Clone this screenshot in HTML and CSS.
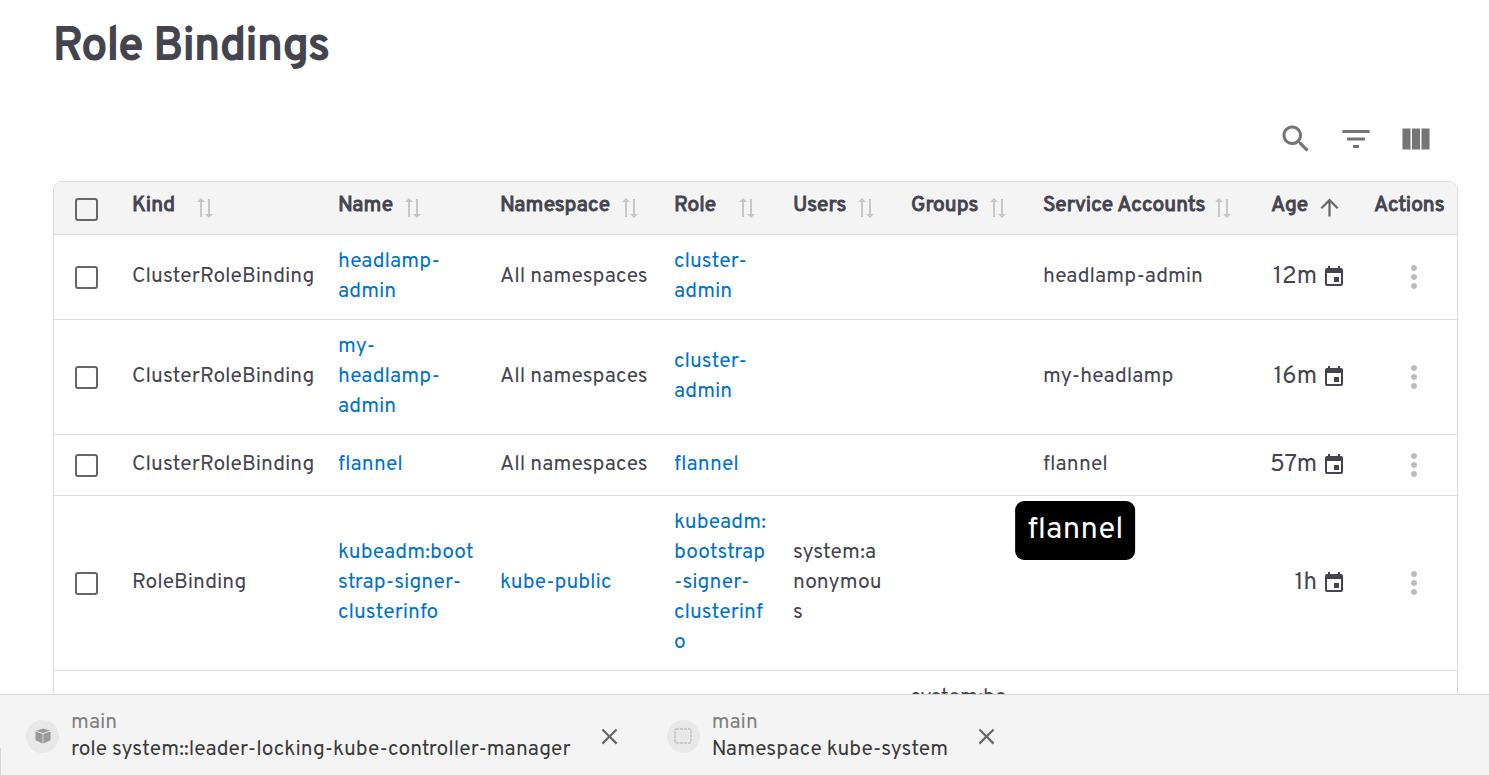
FILE: index.html
```html
<!DOCTYPE html>
<html lang="en">
<head>
<meta charset="utf-8">
<meta name="viewport" content="width=device-width, initial-scale=1">
<title>Role Bindings</title>
<link rel="stylesheet" href="styles.css">
</head>
<body>
<svg class="sprite" aria-hidden="true">
  <symbol id="i-search" viewBox="0 0 24 24"><path d="M15.5 14h-.79l-.28-.27C15.41 12.59 16 11.11 16 9.5 16 5.91 13.09 3 9.5 3S3 5.91 3 9.5 5.91 16 9.5 16c1.61 0 3.09-.59 4.23-1.57l.27.28v.79l5 4.99L20.49 19l-4.99-5zm-6 0C7.01 14 5 11.99 5 9.5S7.01 5 9.5 5 14 7.01 14 9.5 11.99 14 9.5 14z"/></symbol>
  <symbol id="i-filter" viewBox="0 0 24 24"><path d="M10 18h4v-2h-4v2zM3 6v2h18V6H3zm3 7h12v-2H6v2z"/></symbol>
  <symbol id="i-columns" viewBox="0 0 24 24"><path d="M14.67 5v14H9.33V5h5.34zm1 14H21V5h-5.33v14zm-7.34 0V5H3v14h5.33z"/></symbol>
  <symbol id="i-sort" viewBox="0 0 24 24"><path transform="rotate(-90 12 12)" d="m18 12 4-4-4-4v3H3v2h15zM6 12l-4 4 4 4v-3h15v-2H6z"/></symbol>
  <symbol id="i-up" viewBox="0 0 24 24"><path d="m4 12 1.41 1.41L11 7.83V20h2V7.83l5.58 5.59L20 12l-8-8-8 8z"/></symbol>
  <symbol id="i-calendar" viewBox="0 0 24 24"><path d="M19 19H5V8h14m-3-7v2H8V1H6v2H5c-1.11 0-2 .89-2 2v14a2 2 0 0 0 2 2h14a2 2 0 0 0 2-2V5a2 2 0 0 0-2-2h-1V1m-1 11h-5v5h5v-5Z"/></symbol>
  <symbol id="i-more" viewBox="0 0 24 24"><path d="M12 8c1.1 0 2-.9 2-2s-.9-2-2-2-2 .9-2 2 .9 2 2 2zm0 2c-1.1 0-2 .9-2 2s.9 2 2 2 2-.9 2-2-.9-2-2-2zm0 6c-1.1 0-2 .9-2 2s.9 2 2 2 2-.9 2-2-.9-2-2-2z"/></symbol>
  <symbol id="i-close" viewBox="0 0 24 24"><path d="M19 6.41 17.59 5 12 10.59 6.41 5 5 6.41 10.59 12 5 17.59 6.41 19 12 13.41 17.59 19 19 17.59 13.41 12z"/></symbol>
</svg>

<main class="page">
  <h1 class="title">Role Bindings</h1>
  <div class="toolbar">
    <button class="icon-btn" type="button" aria-label="Search"><svg><use href="#i-search"/></svg></button>
    <button class="icon-btn" type="button" aria-label="Filters"><svg><use href="#i-filter"/></svg></button>
    <button class="icon-btn" type="button" aria-label="Columns"><svg><use href="#i-columns"/></svg></button>
  </div>
  <div class="table-frame">
    <table class="table">
      <colgroup>
        <col class="c-check"><col class="c-kind"><col class="c-name"><col class="c-ns"><col class="c-role"><col class="c-users"><col class="c-groups"><col class="c-sa"><col class="c-age"><col class="c-actions">
      </colgroup>
      <thead>
        <tr>
          <th class="check check-all"><input class="box" type="checkbox" aria-label="Select all"></th>
          <th><span class="head"><span class="label">Kind</span><svg class="sort"><use href="#i-sort"/></svg></span></th>
          <th><span class="head"><span class="label">Name</span><svg class="sort"><use href="#i-sort"/></svg></span></th>
          <th><span class="head"><span class="label">Namespace</span><svg class="sort"><use href="#i-sort"/></svg></span></th>
          <th><span class="head"><span class="label">Role</span><svg class="sort"><use href="#i-sort"/></svg></span></th>
          <th><span class="head"><span class="label">Users</span><svg class="sort"><use href="#i-sort"/></svg></span></th>
          <th><span class="head"><span class="label">Groups</span><svg class="sort"><use href="#i-sort"/></svg></span></th>
          <th><span class="head"><span class="label">Service Accounts</span><svg class="sort"><use href="#i-sort"/></svg></span></th>
          <th><span class="head head-end">Age<svg class="sorted"><use href="#i-up"/></svg></span></th>
          <th><span class="head">Actions</span></th>
        </tr>
      </thead>
      <tbody>
        <tr>
          <td class="check"><input class="box" type="checkbox" aria-label="Select headlamp-admin"></td>
          <td>ClusterRoleBinding</td>
          <td><a href="#">headlamp-<br>admin</a></td>
          <td>All namespaces</td>
          <td><a href="#">cluster-<br>admin</a></td>
          <td></td><td></td>
          <td>headlamp-admin</td>
          <td><span class="age">12m<svg><use href="#i-calendar"/></svg></span></td>
          <td class="actions"><button class="more" type="button" aria-label="Actions"><svg><use href="#i-more"/></svg></button></td>
        </tr>
        <tr>
          <td class="check"><input class="box" type="checkbox" aria-label="Select my-headlamp-admin"></td>
          <td>ClusterRoleBinding</td>
          <td><a href="#">my-<br>headlamp-<br>admin</a></td>
          <td>All namespaces</td>
          <td><a href="#">cluster-<br>admin</a></td>
          <td></td><td></td>
          <td>my-headlamp</td>
          <td><span class="age">16m<svg><use href="#i-calendar"/></svg></span></td>
          <td class="actions"><button class="more" type="button" aria-label="Actions"><svg><use href="#i-more"/></svg></button></td>
        </tr>
        <tr>
          <td class="check"><input class="box" type="checkbox" aria-label="Select flannel"></td>
          <td>ClusterRoleBinding</td>
          <td><a href="#">flannel</a></td>
          <td>All namespaces</td>
          <td><a href="#">flannel</a></td>
          <td></td><td></td>
          <td><span class="tip-anchor">flannel<span class="tip" role="tooltip">flannel</span></span></td>
          <td><span class="age">57m<svg><use href="#i-calendar"/></svg></span></td>
          <td class="actions"><button class="more" type="button" aria-label="Actions"><svg><use href="#i-more"/></svg></button></td>
        </tr>
        <tr>
          <td class="check"><input class="box" type="checkbox" aria-label="Select kubeadm:bootstrap-signer-clusterinfo"></td>
          <td>RoleBinding</td>
          <td><a href="#">kubeadm:boot<br>strap-signer-<br>clusterinfo</a></td>
          <td><a href="#">kube-public</a></td>
          <td><a href="#">kubeadm:<br>bootstrap<br>-signer-<br>clusterinf<br>o</a></td>
          <td>system:a<br>nonymou<br>s</td><td></td>
          <td></td>
          <td><span class="age">1h<svg><use href="#i-calendar"/></svg></span></td>
          <td class="actions"><button class="more" type="button" aria-label="Actions"><svg><use href="#i-more"/></svg></button></td>
        </tr>
        <tr>
          <td></td><td></td><td></td><td></td><td></td><td></td>
          <td>system:bo</td>
          <td></td><td></td><td></td>
        </tr>
      </tbody>
    </table>
  </div>
</main>

<footer class="dock">
  <div class="task">
    <span class="badge">
      <svg viewBox="0 0 16 16"><path fill="#999" d="M8 .5 15 2.7 8 5 1 2.7zM.5 3.6 7.6 6v9.4L.5 12.2zM15.5 3.6 8.4 6v9.4l7.1-3.2z"/></svg>
    </span>
    <span class="task-text"><span class="cluster">main</span><span>role system::leader-locking-kube-controller-manager</span></span>
    <button class="close" type="button" aria-label="Close"><svg><use href="#i-close"/></svg></button>
  </div>
  <div class="task">
    <span class="badge">
      <svg class="wide" viewBox="0 0 18 16"><rect x="1" y="1" width="16" height="14" rx="1" fill="none" stroke="#a8a8a8" stroke-dasharray="3 1"/></svg>
    </span>
    <span class="task-text"><span class="cluster">main</span><span>Namespace kube-system</span></span>
    <button class="close" type="button" aria-label="Close"><svg><use href="#i-close"/></svg></button>
  </div>
</footer>
</body>
</html>
```
FILE: styles.css
```css
* { box-sizing: border-box; }

body {
  margin: 0;
  height: 100vh;
  display: flex;
  flex-direction: column;
  overflow: hidden;
  background: #fff;
  color: #44444f;
  font-family: Overpass, Roboto, "Liberation Sans", sans-serif;
  font-size: 21px;
  line-height: 30px;
}

.sprite { position: absolute; width: 0; height: 0; }

svg { display: block; fill: currentColor; flex: none; }

button {
  margin: 0;
  padding: 0;
  border: 0;
  background: none;
  color: inherit;
  font: inherit;
  cursor: pointer;
}

a { color: #0072c9; text-decoration: none; }

.page {
  flex: 1;
  min-height: 0;
  overflow: hidden;
  padding: 20px 31px 0 53px;
}

.title {
  margin: 0;
  font-size: 45px;
  font-weight: 400;
  line-height: 56px;
  -webkit-text-stroke: 2px currentColor;
}

.toolbar {
  display: flex;
  justify-content: flex-end;
  gap: 24px;
  padding: 45px 24px 24px;
  color: #757575;
}

.icon-btn svg, .more svg { width: 36px; height: 36px; }

.table-frame {
  border: 1px solid #dcdcde;
  border-radius: 9px;
  overflow: hidden;
}

.table {
  width: 100%;
  table-layout: fixed;
  border-collapse: separate;
  border-spacing: 0;
}

.c-check { width: 66px; }
.c-kind { width: 206px; }
.c-name { width: 162px; }
.c-ns { width: 174px; }
.c-role { width: 119px; }
.c-users { width: 118px; }
.c-groups { width: 132px; }
.c-sa { width: 216px; }
.c-age { width: 115px; }
.c-actions { width: 95px; }

th, td {
  padding: 12px;
  border-bottom: 1px solid #dcdcde;
  text-align: left;
  vertical-align: middle;
  white-space: nowrap;
}

th {
  padding: 9px 12px 13px;
  background: #f4f4f4;
  font-weight: 400;
  -webkit-text-stroke: 1px currentColor;
}

.head { display: flex; align-items: center; gap: 8px; }
.head-end { justify-content: flex-end; padding-right: 7px; }
.label { min-width: 53px; }

.sort { width: 24px; height: 24px; margin-top: 4px; color: #c8c8c8; }
.sorted { width: 27px; height: 27px; margin-top: 2px; color: #666; }

.check { padding: 0 0 0 21px; }
.check-all { padding-top: 2px; }

.box {
  appearance: none;
  display: block;
  width: 23px;
  height: 23px;
  margin: 0;
  border: 2px solid #666;
  border-radius: 3px;
  background: transparent;
}

.age {
  display: flex;
  justify-content: flex-end;
  align-items: center;
  gap: 5px;
  padding-right: 4px;
  font-size: 24px;
}

.age svg { width: 24px; height: 24px; }

.actions { padding-left: 20px; text-align: center; }
.more { display: block; margin: 0 auto; color: #bbb; }

.tip-anchor { position: relative; }

.tip {
  position: absolute;
  top: 50px;
  left: 50%;
  transform: translateX(-50%);
  padding: 10px 12px 9px;
  border-radius: 9px;
  background: #000;
  color: #fff;
  font-size: 31px;
  line-height: 40px;
}

.dock {
  position: relative;
  flex: none;
  display: flex;
  gap: 44px;
  padding: 14px 26px 12px;
  border-top: 1px solid #d4d4d4;
  background: #f4f4f4;
  color: #3b3b3b;
  line-height: 27px;
}

.dock::before {
  content: "";
  position: absolute;
  left: 0;
  bottom: 0;
  height: 27px;
  border-left: 1px solid #d4d4d4;
}

.task { display: flex; align-items: center; gap: 12px; }
.task-text { display: flex; flex-direction: column; margin-right: 13px; }
.cluster { color: #808080; }

.badge {
  display: flex;
  align-items: center;
  justify-content: center;
  width: 33px;
  height: 33px;
  border-radius: 50%;
  background: #e8e8e8;
}

.badge svg { width: 16px; height: 16px; }
.badge .wide { width: 18px; }

.close svg { width: 27px; height: 27px; color: #666; }
```
